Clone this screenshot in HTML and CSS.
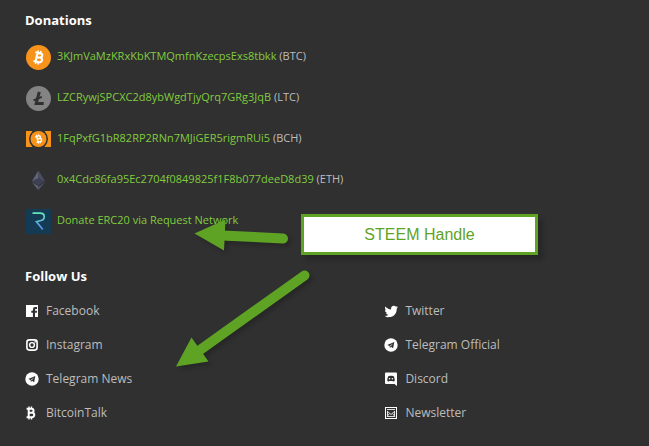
FILE: index.html
```
<!DOCTYPE html>
<html lang="en">
<head>
    <meta charset="UTF-8">
    <meta name="viewport" content="width=device-width, initial-scale=1.0">
    <title>Donations</title>
    <link rel="stylesheet" href="styles.css">
</head>
<body>
    <!-- shared icon shapes -->
    <svg class="sprite" aria-hidden="true">
        <symbol id="icon-telegram" viewBox="0 0 14 14">
            <circle cx="7" cy="7" r="6.7" fill="#fff"/>
            <path d="M3.2 7.1L10.3 4.1L9.1 10.2L7.1 8.8L5.9 9.9L5.6 8Z" fill="#303030"/>
            <path d="M5.7 8L9.2 5.2L6.7 8.3Z" fill="#fff"/>
        </symbol>
        <symbol id="icon-coin" viewBox="0 0 14 14">
            <path d="M4.7 2.8V11.2M2.6 2.8H7.6A1.9 1.9 0 0 1 7.6 6.7H4.7M7.6 6.7H8A2.2 2.2 0 0 1 8 11.2H2.6" fill="none" stroke="currentColor" stroke-width="2"/>
            <path d="M5 .5V2.8M7.5 .5V2.8M5 11.2V13.5M7.5 11.2V13.5" stroke="currentColor" stroke-width="1.4"/>
        </symbol>
    </svg>

    <main class="footer">
        <section class="donations">
            <h2>Donations</h2>
            <ul class="donation-list">
                <li>
                    <svg class="coin" viewBox="0 0 25 25">
                        <circle cx="12.5" cy="12.5" r="12.5" fill="#f7931a"/>
                        <g transform="rotate(12 12.5 12.5)"><use href="#icon-coin" class="white" x="5" y="5" width="16" height="15"/></g>
                    </svg>
                    <p><a href="#">3KJmVaMzKRxKbKTMQmfnKzecpsExs8tbkk</a> (BTC)</p>
                </li>
                <li>
                    <svg class="coin" viewBox="0 0 25 25">
                        <circle cx="12.5" cy="12.5" r="12.5" fill="#838383"/>
                        <path d="M13.3 5.8L10.2 17.4H17.7" fill="none" stroke="#303030" stroke-width="3"/>
                        <path d="M7.5 14.3L15.8 10.8" stroke="#303030" stroke-width="1.8"/>
                    </svg>
                    <p><a href="#">LZCRywjSPCXC2d8ybWgdTjyQrq7GRg3JqB</a> (LTC)</p>
                </li>
                <li>
                    <svg class="coin" viewBox="0 0 25 25">
                        <path d="M0 4H6.5Q-.5 12 6.5 20H0ZM25 4H18.5Q25.5 12 18.5 20H25Z" fill="#f7931a"/>
                        <circle cx="12.5" cy="12" r="8" fill="#f7931a"/>
                        <g transform="rotate(-14 12.5 12)"><use href="#icon-coin" class="white" x="8" y="7" width="10" height="10"/></g>
                    </svg>
                    <p><a href="#">1FqPxfG1bR82RP2RNn7MJiGER5rigmRUi5</a> (BCH)</p>
                </li>
                <li>
                    <svg class="coin" viewBox="0 0 25 25">
                        <path d="M12.5 2.5L6 13L12.5 17Z" fill="#62657b"/>
                        <path d="M12.5 2.5L19 13L12.5 17Z" fill="#4b4d62"/>
                        <path d="M12.5 10L6 13L12.5 17L19 13Z" fill="#3e4054"/>
                        <path d="M6 14.3L12.5 22.3V18.3Z" fill="#62657b"/>
                        <path d="M19 14.3L12.5 22.3V18.3Z" fill="#4b4d62"/>
                    </svg>
                    <p><a href="#">0x4Cdc86fa95Ec2704f0849825f1F8b077deeD8d39</a> (ETH)</p>
                </li>
                <li>
                    <svg class="coin" viewBox="0 0 25 25">
                        <defs>
                            <linearGradient id="request" x1="0" y1="0" x2="0" y2="1">
                                <stop offset="0" stop-color="#62e5bd"/>
                                <stop offset="1" stop-color="#5a8df5"/>
                            </linearGradient>
                        </defs>
                        <rect width="25" height="25" fill="#153a54"/>
                        <path d="M6.5 4.2H14C19.8 4.2 19.2 10.8 15 11.5L10.5 12.8L16.8 20.5" fill="none" stroke="url(#request)" stroke-width="1.7"/>
                    </svg>
                    <p><a href="#">Donate ERC20 via Request Network</a></p>
                </li>
            </ul>
        </section>

        <section class="follow">
            <h2>Follow Us</h2>
            <div class="social-list">
                <a href="#">
                    <svg viewBox="0 0 14 14"><path d="M1 1H13V13H10V8.7H11.8L12 6.7H10V5.7Q10 5 10.800 5H12V3.1H10.2Q7.9 3.1 7.9 5.4V6.7H6.3V8.7H7.9V13H1Z" fill="#fff"/></svg>
                    Facebook
                </a>
                <a href="#">
                    <svg viewBox="0 0 14 14"><path d="M5.1 12.4c-.8 2-3.2.1-4.5-.4 1.5.1 2.9-.3 4-1.2-1.2 0-2.2-.8-2.6-1.9h1.2C1.9 8.6.9 7.5.9 6l1.3.4C1 5.5.6 3.9 1.4 2.6 2.8 4.3 4.8 5.4 7.1 5.5 6.7 3.5 8 1.8 9.9 1.8c.8 0 1.5.3 2 .9l1.8-.7-1.2 1.6 1.6-.4-1.4 1.5C12.8 9.500 9.800 13 5.100 13 3.500 13 1.900 12.600.6 11.800" fill="#fff"/></svg>
                    Twitter
                </a>
                <a href="#">
                    <svg viewBox="0 0 14 14"><rect x="1.9" y="1.9" width="10.2" height="10.2" rx="2.5" fill="none" stroke="#fff" stroke-width="1.6"/><circle cx="7" cy="7" r="2.4" fill="none" stroke="#fff" stroke-width="1.4"/><circle cx="10.1" cy="3.9" r=".8" fill="#fff"/></svg>
                    Instagram
                </a>
                <a href="#">
                    <svg viewBox="0 0 14 14"><use href="#icon-telegram"/></svg>
                    Telegram Official
                </a>
                <a href="#">
                    <svg viewBox="0 0 14 14"><use href="#icon-telegram"/></svg>
                    Telegram News
                </a>
                <a href="#">
                    <svg viewBox="0 0 14 14"><path d="M2 .5H12Q13 .5 13 1.5V14L10.5 12H2Q1 12 1 11V1.5Q1 .5 2 .5Z" fill="#fff"/><path d="M3.2 8.800Q3.2 5.500 4.500 4.100Q7 3.200 9.500 4.100Q10.800 5.500 10.800 8.800Q10 9.600 9 9.500L8.500 8.900H5.500L5 9.500Q4 9.600 3.200 8.800Z" fill="#303030"/><circle cx="5.6" cy="6.8" r=".8" fill="#fff"/><circle cx="8.4" cy="6.8" r=".8" fill="#fff"/></svg>
                    Discord
                </a>
                <a href="#">
                    <svg viewBox="0 0 14 14" class="white"><use href="#icon-coin" x="-1"/></svg>
                    BitcoinTalk
                </a>
                <a href="#">
                    <svg viewBox="0 0 14 14"><rect x="1.5" y="1.5" width="11" height="11" fill="none" stroke="#fff"/><path d="M3 3.5H11M3 5L7 8.5L11 5M3 10.5H11M3 10.5L5.5 7.5M11 10.5L8.5 7.5M3.5 5V10.5M10.5 5V10.5" fill="none" stroke="#ddd"/></svg>
                    Newsletter
                </a>
            </div>
        </section>

        <!-- callout and arrows over the page -->
        <div class="callout">STEEM Handle</div>
        <svg class="arrows" width="330" height="380" viewBox="0 0 330 380" aria-hidden="true">
            <path d="M283 238.5L222 235.5M304.500 275.500L200 350" fill="none" stroke="#5fa325" stroke-width="10" stroke-linecap="round"/>
            <path d="M194.500 233.500L225.500 219.500L224 250.500ZM176 366.500L191.500 337.500L208.500 361.500Z" fill="#5fa325"/>
        </svg>
    </main>
</body>
</html>
```
FILE: styles.css
```
* {
    box-sizing: border-box;
}
body {
    margin: 0;
    background-color: #303030;
    color: #bdbdbd;
    font-family: "Open Sans", "Noto Sans", sans-serif;
    font-size: 12px;
}
.sprite {
    display: none;
}
.footer {
    position: relative;
    padding: 10px 25px 16px;
}
h2 {
    margin: 0;
    color: #fff;
    font-size: 13px;
    font-weight: 700;
    line-height: 20px;
}
.donation-list {
    display: flex;
    flex-direction: column;
    gap: 16px;
    margin: 0;
    padding: 15px 1px 32px;
    list-style: none;
}
.donation-list li {
    display: flex;
    gap: 6px;
}
.donation-list p {
    margin: 0;
    font-size: 11px;
    line-height: 21px;
}
.donation-list a {
    color: #80cc3f;
    text-decoration: none;
}
.coin {
    flex: none;
    width: 25px;
    height: 25px;
}
.white {
    color: #fff;
}
.social-list {
    display: grid;
    grid-template-columns: 3fr 2fr;
    row-gap: 14px;
    padding-top: 15px;
}
.social-list a {
    display: flex;
    align-items: center;
    gap: 7px;
    color: #bdbdbd;
    line-height: 20px;
    text-decoration: none;
}
.social-list svg {
    width: 14px;
    height: 14px;
}
.donation-list a:hover,
.social-list a:hover {
    text-decoration: underline;
}
/* annotations */
.callout {
    position: absolute;
    top: 214px;
    left: 301px;
    width: 237px;
    border: 3px solid #5fa325;
    background-color: #fff;
    box-shadow: 5px 5px 5px rgba(0, 0, 0, 0.2);
    color: #5fa325;
    font-family: "Liberation Sans", Arial, sans-serif;
    font-size: 16px;
    line-height: 35px;
    text-align: center;
}
.arrows {
    position: absolute;
    top: 0;
    left: 0;
    filter: drop-shadow(3px 3px 2px rgba(0, 0, 0, 0.2));
    pointer-events: none;
}
```
